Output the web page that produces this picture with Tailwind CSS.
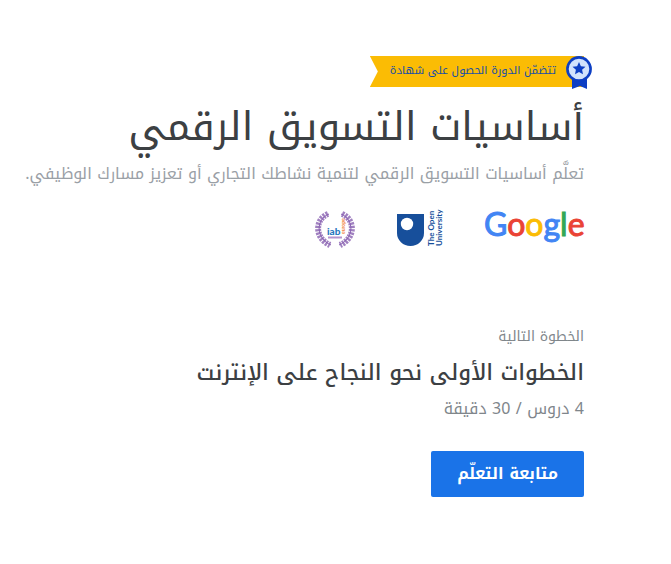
<!DOCTYPE html>
<html lang="ar" dir="rtl">
<head>
    <meta charset="UTF-8">
    <meta name="viewport" content="width=device-width, initial-scale=1.0">
    <title>أساسيات التسويق الرقمي</title>
    <script src="https://cdn.jsdelivr.net/npm/@tailwindcss/browser@4"></script>
</head>
<body class="bg-white font-['Noto_Kufi_Arabic','Noto_Sans_Arabic','Noto_Sans','DejaVu_Sans',sans-serif] text-[#3c4043]">
    <main class="flex flex-col items-start pt-14 pr-[87px] pb-16">
        <!-- Certificate ribbon -->
        <div class="relative">
            <div class="flex h-[31px] items-center bg-[#fbbc04] pr-7 pl-5 [clip-path:polygon(0_0,100%_0,100%_100%,0_100%,8px_50%)]">
                <span class="text-[11px] whitespace-nowrap text-[#174ea6]">تتضمّن الدورة الحصول على شهادة</span>
            </div>
            <svg class="absolute top-0 -right-2 h-[33px] w-[26px]" viewBox="0 0 26 33" aria-hidden="true">
                <path d="M6 20h15v13l-7-3-8 3z" fill="#0d3fc4"/>
                <circle cx="13" cy="13" r="11.6" fill="#d2e3fc" stroke="#0d3fc4" stroke-width="2.6"/>
                <path d="M13 6l1.9 4.2 4.6.5-3.4 3.1.9 4.5-4-2.3-4 2.3.9-4.5-3.4-3.1 4.6-.5z" fill="#0d3fc4"/>
            </svg>
        </div>

        <h1 class="mt-2 text-[40px] leading-[64px] whitespace-nowrap">أساسيات التسويق الرقمي</h1>
        <p class="text-base leading-[30px] whitespace-nowrap text-[#9aa0a6]">تعلَّم أساسيات التسويق الرقمي لتنمية نشاطك التجاري أو تعزيز مسارك الوظيفي.</p>

        <!-- Partners -->
        <div class="mt-5 flex items-start gap-10">
            <svg class="h-10 w-[100px] overflow-visible" viewBox="0 0 100 40" role="img" aria-label="Google">
                <text x="0" y="27" direction="ltr" font-family="Lato, sans-serif" font-size="32" stroke-width="1"><tspan fill="#4285f4" stroke="#4285f4">G</tspan><tspan fill="#ea4335" stroke="#ea4335">o</tspan><tspan fill="#fbbc05" stroke="#fbbc05">o</tspan><tspan fill="#4285f4" stroke="#4285f4">g</tspan><tspan fill="#34a853" stroke="#34a853">l</tspan><tspan fill="#ea4335" stroke="#ea4335">e</tspan></text>
            </svg>
            <svg class="h-10 w-12 overflow-visible" viewBox="0 0 48 40" role="img" aria-label="The Open University">
                <path d="M1 5h27v19a13.5 13 0 0 1-27 0z" fill="#174f9b"/>
                <circle cx="11" cy="15" r="6.2" fill="#fff"/>
                <g direction="ltr" font-family="Lato, sans-serif" font-size="8" font-weight="700" fill="#174f9b">
                    <text transform="translate(38 37) rotate(-90)">The Open</text>
                    <text transform="translate(46 37) rotate(-90)">University</text>
                </g>
            </svg>
            <svg class="h-10 w-[42px] overflow-visible" viewBox="0 0 42 40" role="img" aria-label="iab europe">
                <g fill="none" stroke="#8860b0">
                    <path d="M15 5C2 10 1 29 17 36M27 5c13 5 14 24-2 31"/>
                    <path d="M14 5C1 10 0 29 16 36M28 5c13 5 14 24-2 31" stroke-width="6" stroke-dasharray="2.2 1" opacity=".8"/>
                </g>
                <text x="13" y="26" direction="ltr" font-family="Lato, sans-serif" font-size="10" font-weight="900" fill="#2878be">iab</text>
                <text transform="translate(31 25) rotate(-90)" direction="ltr" font-family="Lato, sans-serif" font-size="5" font-weight="700" fill="#f0813a">europe</text>
                <path d="M14 28.500h14" stroke="#b594cf" stroke-width="2"/>
            </svg>
        </div>

        <!-- Next step -->
        <section class="mt-[78px] flex flex-col items-start">
            <p class="text-sm leading-5 text-[#80868b]">الخطوة التالية</p>
            <h2 class="mt-2 text-[22px] leading-9 font-medium whitespace-nowrap">الخطوات الأولى نحو النجاح على الإنترنت</h2>
            <p class="mt-1 text-base leading-7 text-[#80868b]">4 دروس / 30 دقيقة</p>
            <button type="button" class="mt-7 h-[46px] rounded-[2px] bg-[#1a73e8] px-[26px] text-base font-bold text-white">متابعة التعلّم</button>
        </section>
    </main>
</body>
</html>
